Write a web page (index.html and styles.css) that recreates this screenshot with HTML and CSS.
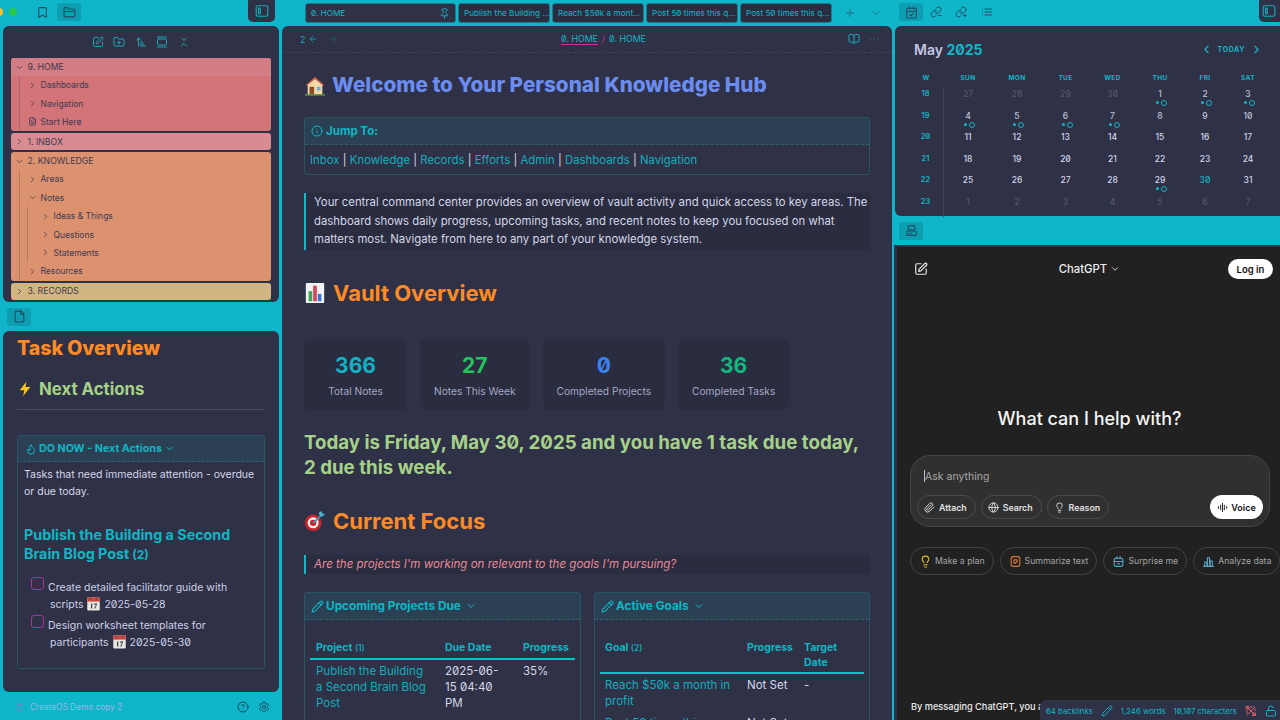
FILE: index.html
```html
<!DOCTYPE html>
<html lang="en">
<head>
<meta charset="utf-8">
<title>Knowledge Hub</title>
<link rel="stylesheet" href="styles.css">
</head>
<body>
<svg class="defs" aria-hidden="true">
<symbol id="bookmark" viewBox="0 0 24 24"><path d="M19 21l-7-4-7 4V5a2 2 0 0 1 2-2h10a2 2 0 0 1 2 2z"/></symbol>
<symbol id="folder" viewBox="0 0 24 24"><path d="M20 20a2 2 0 0 0 2-2V8a2 2 0 0 0-2-2h-7.9a2 2 0 0 1-1.69-.9L9.6 3.9A2 2 0 0 0 7.93 3H4a2 2 0 0 0-2 2v13a2 2 0 0 0 2 2Z"/><path d="M2 10h20"/></symbol>
<symbol id="sidebar" viewBox="0 0 24 24"><rect x="2" y="3" width="20" height="18" rx="3"/><rect x="6" y="7" width="3" height="10" rx="1"/></symbol>
<symbol id="edit" viewBox="0 0 24 24"><path d="M12 3H5a2 2 0 0 0-2 2v14a2 2 0 0 0 2 2h14a2 2 0 0 0 2-2v-7"/><path d="M18.375 2.625a1 1 0 0 1 3 3l-9.013 9.014a2 2 0 0 1-.853.505l-2.873.84a.5.5 0 0 1-.62-.62l.84-2.873a2 2 0 0 1 .506-.852z"/></symbol>
<symbol id="folderplus" viewBox="0 0 24 24"><path d="M20 20a2 2 0 0 0 2-2V8a2 2 0 0 0-2-2h-7.9a2 2 0 0 1-1.69-.9L9.6 3.9A2 2 0 0 0 7.93 3H4a2 2 0 0 0-2 2v13a2 2 0 0 0 2 2Z"/><path d="M12 10v6M9 13h6"/></symbol>
<symbol id="sort" viewBox="0 0 24 24"><path d="m3 8 4-4 4 4M7 4v16M11 12h4M11 16h7M11 20h10"/></symbol>
<symbol id="gallery" viewBox="0 0 24 24"><path d="M3 2h18M3 22h18"/><rect x="3" y="6" width="18" height="12" rx="2"/></symbol>
<symbol id="collapse" viewBox="0 0 24 24"><path d="m7 20 5-5 5 5M7 4l5 5 5-5"/></symbol>
<symbol id="right" viewBox="0 0 24 24"><path d="m9 18 6-6-6-6"/></symbol>
<symbol id="down" viewBox="0 0 24 24"><path d="m6 9 6 6 6-6"/></symbol>
<symbol id="left" viewBox="0 0 24 24"><path d="m15 18-6-6 6-6"/></symbol>
<symbol id="filetext" viewBox="0 0 24 24"><path d="M15 2H6a2 2 0 0 0-2 2v16a2 2 0 0 0 2 2h12a2 2 0 0 0 2-2V7Z"/><path d="M14 2v4a2 2 0 0 0 2 2h4M10 9H8M16 13H8M16 17H8"/></symbol>
<symbol id="file" viewBox="0 0 24 24"><path d="M15 2H6a2 2 0 0 0-2 2v16a2 2 0 0 0 2 2h12a2 2 0 0 0 2-2V7Z"/><path d="M14 2v4a2 2 0 0 0 2 2h4"/></symbol>
<symbol id="pin" viewBox="0 0 24 24"><path d="M12 17v5"/><path d="M9 10.76a2 2 0 0 1-1.11 1.79l-1.78.9A2 2 0 0 0 5 15.24V16a1 1 0 0 0 1 1h12a1 1 0 0 0 1-1v-.76a2 2 0 0 0-1.11-1.79l-1.78-.9A2 2 0 0 1 15 10.76V7a1 1 0 0 1 1-1 2 2 0 0 0 0-4H8a2 2 0 0 0 0 4 1 1 0 0 1 1 1z"/></symbol>
<symbol id="plus" viewBox="0 0 24 24"><path d="M5 12h14M12 5v14"/></symbol>
<symbol id="aleft" viewBox="0 0 24 24"><path d="m12 19-7-7 7-7M19 12H5"/></symbol>
<symbol id="aright" viewBox="0 0 24 24"><path d="M5 12h14M12 5l7 7-7 7"/></symbol>
<symbol id="book" viewBox="0 0 24 24"><path d="M12 7v14"/><path d="M3 18a1 1 0 0 1-1-1V4a1 1 0 0 1 1-1h5a4 4 0 0 1 4 4 4 4 0 0 1 4-4h5a1 1 0 0 1 1 1v13a1 1 0 0 1-1 1h-6a3 3 0 0 0-3 3 3 3 0 0 0-3-3z"/></symbol>
<symbol id="more" viewBox="0 0 24 24"><path d="M4 12h.01M12 12h.01M20 12h.01"/></symbol>
<symbol id="calendar" viewBox="0 0 24 24"><path d="M8 2v4M16 2v4"/><rect x="3" y="4" width="18" height="18" rx="2"/><path d="M3 10h18M9 16l2 2 4-4"/></symbol>
<symbol id="link" viewBox="0 0 24 24"><path d="M10 13a5 5 0 0 0 7.54.54l3-3a5 5 0 0 0-7.07-7.07l-1.72 1.71"/><path d="M14 11a5 5 0 0 0-7.54-.54l-3 3a5 5 0 0 0 7.07 7.07l1.71-1.71"/><path d="M17 19h5"/></symbol>
<symbol id="linkin" viewBox="0 0 24 24"><path d="M10 13a5 5 0 0 0 7.54.54l3-3a5 5 0 0 0-7.07-7.07l-1.72 1.71"/><path d="M14 11a5 5 0 0 0-7.54-.54l-3 3a5 5 0 0 0 7.07 7.07l1.71-1.71"/><path d="M17 19h5M19.5 16.500v5"/></symbol>
<symbol id="list" viewBox="0 0 24 24"><path d="M3 12h.01M3 18h.01M3 6h.01M8 12h13M8 18h13M8 6h13"/></symbol>
<symbol id="printer" viewBox="0 0 24 24"><rect x="6" y="3" width="12" height="8" rx="2"/><rect x="3" y="13" width="18" height="8" rx="2"/><path d="M7 17h2M11 17h2"/></symbol>
<symbol id="flame" viewBox="0 0 24 24"><path d="M8.5 14.5A2.5 2.5 0 0 0 11 12c0-1.380-.5-2-1-3-1.072-2.143-.224-4.054 2-6 .5 2.500 2 4.900 4 6.500 2 1.600 3 3.500 3 5.500a7 7 0 1 1-14 0c0-1.153.433-2.294 1-3a2.500 2.500 0 0 0 2.500 2.500z"/></symbol>
<symbol id="pencil" viewBox="0 0 24 24"><path d="M21.174 6.812a1 1 0 0 0-3.986-3.987L3.842 16.174a2 2 0 0 0-.5.83l-1.321 4.352a.5.5 0 0 0 .623.622l4.353-1.320a2 2 0 0 0 .83-.497z"/><path d="m15 5 4 4"/></symbol>
<symbol id="info" viewBox="0 0 24 24"><circle cx="12" cy="12" r="10"/><path d="M12 16v-4M12 8h.01"/></symbol>
<symbol id="help" viewBox="0 0 24 24"><circle cx="12" cy="12" r="10"/><path d="M9.09 9a3 3 0 0 1 5.830 1c0 2-3 3-3 3M12 17h.01"/></symbol>
<symbol id="gear" viewBox="0 0 24 24"><path d="M12.220 2h-.44a2 2 0 0 0-2 2v.18a2 2 0 0 1-1 1.730l-.43.25a2 2 0 0 1-2 0l-.15-.08a2 2 0 0 0-2.730.73l-.22.38a2 2 0 0 0 .73 2.730l.15.1a2 2 0 0 1 1 1.720v.51a2 2 0 0 1-1 1.740l-.15.09a2 2 0 0 0-.73 2.730l.22.38a2 2 0 0 0 2.730.73l.15-.08a2 2 0 0 1 2 0l.43.25a2 2 0 0 1 1 1.730V20a2 2 0 0 0 2 2h.44a2 2 0 0 0 2-2v-.18a2 2 0 0 1 1-1.730l.43-.25a2 2 0 0 1 2 0l.15.08a2 2 0 0 0 2.730-.73l.22-.39a2 2 0 0 0-.73-2.730l-.15-.08a2 2 0 0 1-1-1.740v-.5a2 2 0 0 1 1-1.740l.15-.09a2 2 0 0 0 .73-2.730l-.22-.38a2 2 0 0 0-2.730-.73l-.15.08a2 2 0 0 1-2 0l-.43-.25a2 2 0 0 1-1-1.730V4a2 2 0 0 0-2-2z"/><circle cx="12" cy="12" r="3"/></symbol>
<symbol id="updown" viewBox="0 0 24 24"><path d="m7 15 5 5 5-5M7 9l5-5 5 5"/></symbol>
<symbol id="lock" viewBox="0 0 24 24"><rect x="3" y="11" width="18" height="11" rx="2"/><path d="M7 11V7a5 5 0 0 1 9.900-1"/></symbol>
<symbol id="bulb" viewBox="0 0 24 24"><path d="M15 14c.2-1 .7-1.700 1.500-2.500 1-.9 1.500-2.200 1.500-3.500A6 6 0 0 0 6 8c0 1 .2 2.200 1.500 3.500.7.7 1.300 1.500 1.500 2.500M9 18h6M10 22h4"/></symbol>
<symbol id="globe" viewBox="0 0 24 24"><circle cx="12" cy="12" r="10"/><path d="M12 2a14.500 14.500 0 0 0 0 20 14.500 14.500 0 0 0 0-20M2 12h20"/></symbol>
<symbol id="clip" viewBox="0 0 24 24"><path d="m21.440 11.050-9.190 9.190a6 6 0 0 1-8.490-8.490l8.570-8.570A4 4 0 1 1 18 8.840l-8.590 8.570a2 2 0 0 1-2.830-2.830l8.490-8.480"/></symbol>
<symbol id="voice" viewBox="0 0 24 24"><path d="M3 10v4M8 7v10M12 3v18M16 7v10M21 10v4"/></symbol>
<symbol id="summ" viewBox="0 0 24 24"><rect x="4" y="3" width="16" height="18" rx="4"/><path d="M9 9h6v3l-3 3H9z"/></symbol>
<symbol id="gift" viewBox="0 0 24 24"><rect x="4" y="6" width="16" height="15" rx="3"/><path d="M4 12h16M9 3v4M15 3v4M10 16h4"/></symbol>
<symbol id="chart" viewBox="0 0 24 24"><path d="M3 21h18M5 21v-8h4v8M10 21V5h4v16M15 21v-10h4v10"/></symbol>
<symbol id="nolink" viewBox="0 0 24 24"><path d="M4 4l16 16M20 4 4 20"/><rect x="3" y="3" width="5" height="5"/><rect x="16" y="16" width="5" height="5"/><path d="M11 4h5M4 11v5M20 8v3"/></symbol>
<symbol id="emojical" viewBox="0 0 24 24"><rect x="2" y="2" width="20" height="21" rx="2" fill="#e8e6e3"/><rect x="2" y="2" width="20" height="7" fill="#c9453f"/><path d="M7 1v5M17 1v5" stroke="#555" stroke-width="1.500"/><path d="M8 12h2v8H8zM13 12h5l-3 8h-2l3-6h-3z" fill="#444"/></symbol>
</svg>

<div class="app">
  <aside class="col-left">
    <div class="topbar">
      <div class="lights"><i class="light yellow"></i><i class="light green"></i></div>
      <button class="tool bm"><svg class="ic i13"><use href="#bookmark"/></svg></button>
      <button class="tool on"><svg class="ic i13"><use href="#folder"/></svg></button>
      <span class="grow"></span>
      <button class="toggle"><svg class="ic i14"><use href="#sidebar"/></svg></button>
    </div>
    <section class="panel files">
      <div class="file-tools">
        <svg class="ic i12"><use href="#edit"/></svg>
        <svg class="ic i12"><use href="#folderplus"/></svg>
        <svg class="ic i12"><use href="#sort"/></svg>
        <svg class="ic i12"><use href="#gallery"/></svg>
        <svg class="ic i12"><use href="#collapse"/></svg>
      </div>
      <div class="tree">
        <div class="group g-home">
          <div class="row head"><svg class="ic i9"><use href="#down"/></svg><span>9. HOME</span></div>
          <div class="nest">
            <div class="row"><svg class="ic i9"><use href="#right"/></svg><span>Dashboards</span></div>
            <div class="row"><svg class="ic i9"><use href="#right"/></svg><span>Navigation</span></div>
            <div class="row"><svg class="ic i9"><use href="#filetext"/></svg><span>Start Here</span></div>
          </div>
        </div>
        <div class="group g-inbox"><div class="row head"><svg class="ic i9"><use href="#right"/></svg><span>1. INBOX</span></div></div>
        <div class="group g-know">
          <div class="row head"><svg class="ic i9"><use href="#down"/></svg><span>2. KNOWLEDGE</span></div>
          <div class="nest">
            <div class="row"><svg class="ic i9"><use href="#right"/></svg><span>Areas</span></div>
            <div class="row"><svg class="ic i9"><use href="#down"/></svg><span>Notes</span></div>
            <div class="nest inner">
              <div class="row"><svg class="ic i9"><use href="#right"/></svg><span>Ideas &amp; Things</span></div>
              <div class="row"><svg class="ic i9"><use href="#right"/></svg><span>Questions</span></div>
              <div class="row"><svg class="ic i9"><use href="#right"/></svg><span>Statements</span></div>
            </div>
            <div class="row"><svg class="ic i9"><use href="#right"/></svg><span>Resources</span></div>
          </div>
        </div>
        <div class="group g-rec"><div class="row head"><svg class="ic i9"><use href="#right"/></svg><span>3. RECORDS</span></div></div>
      </div>
    </section>
    <div class="subbar"><button class="tool on small"><svg class="ic i13"><use href="#file"/></svg></button></div>
    <section class="panel tasks">
      <h1 class="task-title">Task Overview</h1>
      <h2 class="task-sub"><svg class="bolt" viewBox="0 0 24 24"><path d="M14 1 4 14h7l-2 9 11-14h-7z"/></svg>Next Actions</h2>
      <hr class="rule">
      <div class="callout do-now">
        <div class="callout-head"><svg class="ic i12"><use href="#flame"/></svg><span>DO NOW - Next Actions</span><svg class="ic i11"><use href="#down"/></svg></div>
        <div class="callout-body">
          <p class="do-desc">Tasks that need immediate attention - overdue or due today.</p>
          <h3 class="do-title">Publish the Building a Second Brain Blog Post<small>(2)</small></h3>
          <div class="task"><i class="check"></i><p>Create detailed facilitator guide with<br><span class="ind">scripts <svg class="cal"><use href="#emojical"/></svg> 2025-05-28</span></p></div>
          <div class="task"><i class="check"></i><p>Design worksheet templates for<br><span class="ind">participants <svg class="cal"><use href="#emojical"/></svg> 2025-05-30</span></p></div>
        </div>
      </div>
    </section>
    <div class="vault">
      <svg class="ic i11 pink"><use href="#updown"/></svg>
      <span class="vault-name">CreateOS Demo copy 2</span>
      <span class="grow"></span>
      <svg class="ic i12"><use href="#help"/></svg>
      <svg class="ic i12"><use href="#gear"/></svg>
    </div>
  </aside>

  <main class="col-mid">
    <div class="tabbar">
      <div class="tab active"><span>0. HOME</span><svg class="ic i11"><use href="#pin"/></svg></div>
      <div class="tab"><span>Publish the Building ...</span></div>
      <div class="tab"><span>Reach $50k a mont...</span></div>
      <div class="tab"><span>Post 50 times this q...</span></div>
      <div class="tab"><span>Post 50 times this q...</span></div>
      <svg class="ic i12 tab-plus"><use href="#plus"/></svg>
      <svg class="ic i12 tab-chev"><use href="#down"/></svg>
    </div>
    <section class="doc">
      <header class="doc-head">
        <div class="nav"><span>2</span><svg class="ic i10"><use href="#aleft"/></svg><svg class="ic i10 dim"><use href="#aright"/></svg></div>
        <div class="crumb"><span class="crumb-link">0. HOME</span><span class="slash">/</span><span>0. HOME</span></div>
        <div class="doc-actions"><svg class="ic i12"><use href="#book"/></svg><svg class="ic i12"><use href="#more"/></svg></div>
      </header>
      <div class="doc-body">
        <h1 class="hub"><svg class="emoji" viewBox="0 0 24 24"><path d="M2 12 12 3l10 9-1.500 1L12 5.500 3.500 13z" fill="#c8553d"/><path d="M4 12l8-6.500 8 6.500v10H4z" fill="#f3d9a8"/><rect x="6" y="14" width="5" height="8" fill="#8a4b2a"/><rect x="14" y="14" width="4" height="4" fill="#6fb3d9"/><path d="M1 22h22v1.500H1z" fill="#6aa84f"/></svg>Welcome to Your Personal Knowledge Hub</h1>
        <div class="callout jump">
          <div class="callout-head"><svg class="ic i12"><use href="#info"/></svg><span>Jump To:</span></div>
          <div class="callout-body jump-links"><a>Inbox</a> | <a>Knowledge</a> | <a>Records</a> | <a>Efforts</a> | <a>Admin</a> | <a>Dashboards</a> | <a>Navigation</a></div>
        </div>
        <blockquote class="intro">Your central command center provides an overview of vault activity and quick access to key areas. The dashboard shows daily progress, upcoming tasks, and recent notes to keep you focused on what matters most. Navigate from here to any part of your knowledge system.</blockquote>
        <h2 class="sect vault-h"><svg class="emoji" viewBox="0 0 24 24"><rect x="2" y="1" width="20" height="22" rx="1" fill="#f2f2f2"/><rect x="5" y="10" width="4" height="11" fill="#3aa655"/><rect x="10" y="4" width="4" height="17" fill="#d6455d"/><rect x="15" y="13" width="4" height="8" fill="#3478d6"/></svg>Vault Overview</h2>
        <div class="stats">
          <div class="stat"><b class="s-teal">366</b><span>Total Notes</span></div>
          <div class="stat"><b class="s-green">27</b><span>Notes This Week</span></div>
          <div class="stat"><b class="s-blue">0</b><span>Completed Projects</span></div>
          <div class="stat"><b class="s-emer">36</b><span>Completed Tasks</span></div>
        </div>
        <p class="today">Today is Friday, May 30, 2025 and you have 1 task due today, 2 due this week.</p>
        <h2 class="sect focus-h"><svg class="emoji" viewBox="0 0 24 24"><circle cx="10" cy="14" r="9" fill="#c9242b"/><circle cx="10" cy="14" r="6" fill="#f4f0ea"/><circle cx="10" cy="14" r="3.500" fill="#c9242b"/><path d="M10 14 21 4" stroke="#3f9bb5" stroke-width="2"/><path d="M19 1l1 3 3 1-3 2-3-1-1-3z" fill="#4db2cc"/></svg>Current Focus</h2>
        <blockquote class="ask">Are the projects I'm working on relevant to the goals I'm pursuing?</blockquote>
        <div class="duo">
          <div class="callout dash">
            <div class="callout-head"><svg class="ic i13"><use href="#pencil"/></svg><span>Upcoming Projects Due</span><svg class="ic i12"><use href="#down"/></svg></div>
            <table class="grid-t t-projects">
              <thead><tr><th>Project <small>(1)</small></th><th>Due Date</th><th>Progress</th></tr></thead>
              <tbody><tr><td><a>Publish the Building a Second Brain Blog Post</a></td><td>2025-06-15 04:40 PM</td><td>35%</td></tr></tbody>
            </table>
          </div>
          <div class="callout dash">
            <div class="callout-head"><svg class="ic i13"><use href="#pencil"/></svg><span>Active Goals</span><svg class="ic i12"><use href="#down"/></svg></div>
            <table class="grid-t t-goals">
              <thead><tr><th>Goal <small>(2)</small></th><th>Progress</th><th>Target Date</th></tr></thead>
              <tbody>
                <tr><td><a>Reach $50k a month in profit</a></td><td>Not Set</td><td>-</td></tr>
                <tr><td><a>Post 50 times this quarter</a></td><td>Not Set</td><td>-</td></tr>
              </tbody>
            </table>
          </div>
        </div>
      </div>
    </section>
  </main>

  <aside class="col-right">
    <div class="topbar right-top">
      <button class="tool on"><svg class="ic i13"><use href="#calendar"/></svg></button>
      <button class="tool plain"><svg class="ic i12"><use href="#link"/></svg></button>
      <button class="tool plain"><svg class="ic i12"><use href="#linkin"/></svg></button>
      <button class="tool plain"><svg class="ic i12"><use href="#list"/></svg></button>
      <span class="grow"></span>
      <button class="toggle rt"><svg class="ic i14"><use href="#sidebar"/></svg></button>
    </div>
    <section class="calendar">
      <div class="cal-head">
        <h2 class="month">May <em>2025</em></h2>
        <div class="cal-nav"><svg class="ic i13"><use href="#left"/></svg><span>TODAY</span><svg class="ic i13"><use href="#right"/></svg></div>
      </div>
      <div class="cal-grid">
        <b class="dow">W</b><b class="dow">SUN</b><b class="dow">MON</b><b class="dow">TUE</b><b class="dow">WED</b><b class="dow">THU</b><b class="dow">FRI</b><b class="dow">SAT</b>
        <i class="wk">18</i><span class="d out">27</span><span class="d out">28</span><span class="d out">29</span><span class="d out">30</span><span class="d mute dots">1</span><span class="d mute dots">2</span><span class="d mute dots">3</span>
        <i class="wk">19</i><span class="d mute dots">4</span><span class="d mute dots">5</span><span class="d mute dots">6</span><span class="d mute dots">7</span><span class="d mute">8</span><span class="d mute">9</span><span class="d mute">10</span>
        <i class="wk">20</i><span class="d">11</span><span class="d">12</span><span class="d">13</span><span class="d">14</span><span class="d">15</span><span class="d">16</span><span class="d">17</span>
        <i class="wk">21</i><span class="d">18</span><span class="d">19</span><span class="d">20</span><span class="d">21</span><span class="d">22</span><span class="d">23</span><span class="d">24</span>
        <i class="wk">22</i><span class="d">25</span><span class="d">26</span><span class="d">27</span><span class="d">28</span><span class="d dots">29</span><span class="d now">30</span><span class="d">31</span>
        <i class="wk">23</i><span class="d out">1</span><span class="d out">2</span><span class="d out">3</span><span class="d out">4</span><span class="d out">5</span><span class="d out">6</span><span class="d out">7</span>
      </div>
    </section>
    <div class="subbar rt-sub"><button class="tool on small"><svg class="ic i13"><use href="#printer"/></svg></button></div>
    <section class="chat">
      <header class="chat-head">
        <svg class="ic i14 white"><use href="#edit"/></svg>
        <div class="chat-title">ChatGPT <svg class="ic i10"><use href="#down"/></svg></div>
        <button class="login">Log in</button>
      </header>
      <h2 class="chat-hello">What can I help with?</h2>
      <div class="ask-box">
        <div class="ask-input"><i class="caret"></i>Ask anything</div>
        <div class="ask-tools">
          <span class="chip"><svg class="ic i11"><use href="#clip"/></svg>Attach</span>
          <span class="chip"><svg class="ic i11"><use href="#globe"/></svg>Search</span>
          <span class="chip"><svg class="ic i11"><use href="#bulb"/></svg>Reason</span>
          <span class="grow"></span>
          <span class="voice"><svg class="ic i11"><use href="#voice"/></svg>Voice</span>
        </div>
      </div>
      <div class="suggest">
        <span class="pill"><svg class="ic i13 c-y"><use href="#bulb"/></svg>Make a plan</span>
        <span class="pill"><svg class="ic i13 c-o"><use href="#summ"/></svg>Summarize text</span>
        <span class="pill"><svg class="ic i13 c-b"><use href="#gift"/></svg>Surprise me</span>
        <span class="pill"><svg class="ic i13 c-b"><use href="#chart"/></svg>Analyze data</span>
      </div>
      <p class="legal">By messaging ChatGPT, you a</p>
    </section>
  </aside>
</div>
<div class="status">
  <span>64 backlinks</span>
  <svg class="ic i12"><use href="#pencil"/></svg>
  <span>1,246 words</span>
  <span>10,107 characters</span>
  <svg class="ic i12 red"><use href="#nolink"/></svg>
  <svg class="ic i12"><use href="#lock"/></svg>
</div>
</body>
</html>
```

FILE: styles.css
```css
* { box-sizing: border-box; }
html, body { margin: 0; padding: 0; height: 100%; }
body {
  width: 1280px; height: 720px; overflow: hidden; position: relative;
  background: #0fb5c8; color: #cdd0e6;
  font-family: Inter, "Noto Sans", sans-serif;
  font-feature-settings: "zero" 1;
}
h1, h2, h3, p, blockquote { margin: 0; }
button { border: 0; padding: 0; background: none; color: inherit; font: inherit; }
.defs { position: absolute; width: 0; height: 0; }
.ic { fill: none; stroke: currentColor; stroke-width: 2; stroke-linecap: round; stroke-linejoin: round; flex: none; display: block; }
.i9 { width: 9px; height: 9px; } .i10 { width: 10px; height: 10px; } .i11 { width: 11px; height: 11px; }
.i12 { width: 12px; height: 12px; } .i13 { width: 13px; height: 13px; } .i14 { width: 14px; height: 14px; }
.i15 { width: 15px; height: 15px; } .i16 { width: 16px; height: 16px; }
.grow { flex: 1; }

.app { display: grid; grid-template-columns: 281px 612px 387px; height: 720px; }
.col-left, .col-mid, .col-right { display: flex; flex-direction: column; min-width: 0; height: 720px; }

.topbar { height: 26px; flex: none; display: flex; align-items: flex-start; color: #1b4f66; }
.lights { display: flex; gap: 6px; margin: 8px 0 0 -5px; width: 36px; }
.light { width: 8px; height: 8px; border-radius: 50%; display: block; }
.yellow { background: #f6bd2f; } .green { background: #2ac84a; }
.tool { width: 24px; height: 18px; border-radius: 3px; display: flex; align-items: center; justify-content: center; margin-top: 3px; color: #234b62; }
.tool.on { background: #0d9eb1; }
.bm { margin-left: -1px; margin-right: 3px; }
.toggle { width: 27px; height: 22px; background: #2f3146; color: #1aa9b9; border-radius: 0 0 5px 5px; display: flex; align-items: center; justify-content: center; margin-right: 6px; }
.panel { background: #2f3146; margin: 0 2px 0 3px; border-radius: 6px; overflow: hidden; }
.files { height: 276px; flex: none; padding: 0 8px; }
.file-tools { height: 32px; display: flex; align-items: center; justify-content: center; gap: 9.500px; color: #1aa7b6; padding: 0 1px 0 0; }
.tree { display: flex; flex-direction: column; gap: 2px; font-size: 8.500px; color: #3e3a50; }
.group { border-radius: 3px; overflow: hidden; }
.row { height: 18.400px; display: flex; align-items: center; gap: 3.500px; padding-left: 4px; white-space: nowrap; }
.head { font-size: 8.700px; padding-left: 4px; height: 18px; }
.nest { margin-left: 8px; border-left: 1.500px solid rgba(90, 60, 70, .3); padding-left: 3px; }
.nest .row { padding-left: 5px; }
.nest.inner { margin: 0 0 0 4px; padding-left: 8px; }
.g-home { background: #d27478; } .g-home .head { background: #d47d84; }
.g-inbox { background: #d88c92; height: 17px; } .g-inbox .head, .g-rec .head { height: 17px; }
.g-know { background: #dd926f; }
.g-rec { background: #d2b682; height: 17px; }
.subbar { height: 29px; flex: none; display: flex; align-items: center; padding-left: 7px; }
.subbar .tool { margin-top: 0; }
.tasks { flex: 1; padding: 0 14px; }
.task-title { font-size: 19.500px; line-height: 24px; font-weight: 800; color: #ff8a24; margin-top: 5px; }
.task-sub { font-size: 16.800px; line-height: 22px; font-weight: 700; color: #a6d189; margin-top: 18px; display: flex; align-items: center; gap: 6px; }
.bolt { width: 16px; height: 16px; fill: #f7c325; }
.rule { border: 0; border-top: 1px solid #4a4d63; margin: 9px 0 0; }
.callout { border: 1px solid #275566; border-radius: 3px; }
.callout-head { background: #2c4054; border-bottom: 1px dashed #2b6273; color: #12b5c4; font-weight: 700; display: flex; align-items: center; gap: 4px; white-space: nowrap; }
.do-now { margin-top: 25px; height: 234px; }
.do-now .callout-head { height: 26px; padding-left: 7px; font-size: 10.700px; gap: 2px; }
.do-now .callout-body { padding: 5px 6px 0; }
.do-desc { font-size: 10.500px; line-height: 16.500px; color: #d5d7ea; }
.do-title { font-size: 14.300px; line-height: 19px; font-weight: 700; color: #12b5c4; margin-top: 25px; }
.do-title small { font-size: 12px; margin-left: 3px; }
.task { display: flex; gap: 4px; margin-top: 2px; font-size: 10.500px; line-height: 17px; color: #cdd0e6; padding-left: 7px; }
.do-title + .task { margin-top: 13px; }
.check { width: 13px; height: 13px; border: 1.500px solid #a8329f; border-radius: 3px; flex: none; display: block; }
.task p { margin-top: 2px; }
.ind { padding-left: 2px; }
.cal { width: 15px; height: 15px; vertical-align: -3px; }
.vault { flex: none; height: 28px; display: flex; align-items: center; gap: 5.500px; padding: 2px 10px 0 13.500px; color: #1a4a60; margin-right: 1px; font-size: 8.300px; }
.vault svg:last-child { margin-left: 4px; }
.pink { color: #d64fd2; }
.vault-name { color: #a3b2e6; white-space: nowrap; }

.tabbar { height: 26px; flex: none; display: flex; align-items: flex-start; padding: 3px 0 0 24px; gap: 2px; color: #1f6f83; }
.tab { height: 20px; width: 92px; background: #2a2c40; border: 1px solid #1c7a8c; border-radius: 3px; color: #15b5c5; font-size: 8.200px; display: flex; align-items: center; padding: 0 5px; white-space: nowrap; overflow: hidden; justify-content: space-between; }
.tab.active { width: 151px; background: #2f3146; }
.tab-plus { margin: 4px 0 0 10px; }
.tab-chev { margin: 4px 0 0 12px; }
.doc { flex: 1; min-height: 0; background: #2f3146; margin: 0 1px; border-radius: 6px 6px 0 0; overflow: hidden; display: flex; flex-direction: column; }
.doc-head { height: 27px; flex: none; border-bottom: 1px dashed #3f4258; display: grid; grid-template-columns: 1fr auto 1fr; align-items: center; padding: 0 12px 0 18px; color: #17a7b6; font-size: 8.800px; }
.nav { display: flex; gap: 3px; align-items: center; }
.dim { opacity: .4; margin-left: 7px; }
.crumb { display: flex; gap: 4px; color: #14b5c4; margin-left: 27px; }
.crumb-link { border-bottom: 1px solid #c42ea8; line-height: 11px; }
.slash { color: #c42ea8; }
.doc-actions { display: flex; gap: 8px; justify-content: flex-end; }
.doc-body { padding: 0 22px; flex: 1; }
.hub { font-size: 20.700px; line-height: 30px; font-weight: 800; color: #6b8cf0; margin-top: 17px; display: flex; align-items: center; gap: 6px; white-space: nowrap; }
.emoji { width: 22px; height: 22px; flex: none; }
.jump { margin-top: 17px; height: 58px; }
.jump .callout-head { height: 27px; padding-left: 6px; font-size: 11.500px; gap: 3px; }
.jump-links { padding: 7px 5px; font-size: 11.400px; line-height: 16px; color: #d5d7ea; white-space: nowrap; }
a { color: #12aebd; }
.intro { margin-top: 18px; border-left: 2px solid #13b5c6; background: #2a2c3f; padding: 0 0 0 8px; font-size: 11.350px; line-height: 18.500px; height: 57px; color: #d5d7ea; }
.sect { font-size: 22px; line-height: 28px; font-weight: 700; color: #ff8a24; display: flex; align-items: center; gap: 7px; }
.vault-h { margin-top: 29px; }
.stats { display: flex; gap: 13px; margin-top: 32px; }
.stat { background: #2a2c3f; height: 71px; min-width: 103px; padding: 0 14px; border-radius: 6px; display: flex; flex-direction: column; align-items: center; text-align: center; font-size: 10.200px; color: #a4a8c4; }
.stat b { font-size: 21px; line-height: 28px; margin-top: 13px; font-weight: 700; }
.stat span { margin-top: 4px; line-height: 14px; white-space: nowrap; }
.s-teal { color: #13b1c6; } .s-green { color: #23c45e; } .s-blue { color: #3c83f5; } .s-emer { color: #11b981; }
.today { font-size: 18.700px; line-height: 25px; font-weight: 700; color: #a6d189; margin-top: 20px; }
.focus-h { margin-top: 27px; }
.ask { margin-top: 20px; border-left: 2px solid #13b5c6; background: #2a2c3f; height: 19px; padding-left: 8px; font-size: 11.550px; line-height: 19px; font-style: italic; color: #e98a98; white-space: nowrap; }
.duo { display: grid; grid-template-columns: 277px 276px; gap: 13px; margin-top: 18px; }
.dash { height: 180px; }
.dash .callout-head { height: 27px; padding-left: 6px; font-size: 11.800px; gap: 2px; }
.dash .callout-head svg:last-child { margin-left: 2px; }
.grid-t { border-collapse: collapse; table-layout: fixed; margin: 15px 0 0 5px; width: 265px; font-size: 11.500px; line-height: 16px; }
.grid-t th { text-align: left; color: #12b5c4; font-size: 10.500px; line-height: 15px; font-weight: 700; padding: 5px 5px 2px; border-bottom: 2px solid #0fc1c9; vertical-align: top; }
.grid-t th small { font-size: 8.500px; font-weight: 500; }
.grid-t td { padding: 3px 5px; vertical-align: top; color: #d5d7ea; }
.t-projects th:nth-child(1) { width: 129px; } .t-projects th:nth-child(2) { width: 78px; }
.t-projects th, .t-projects td { padding-left: 6px; }
.t-projects td:nth-child(1) { padding-right: 10px; }
.t-projects td:nth-child(2) { padding-right: 16px; }
.t-goals th:nth-child(1) { width: 142px; } .t-goals th:nth-child(2) { width: 57px; }
.t-goals { width: 264px; }

.right-top { padding-left: 6px; }
.plain { width: 25.500px; }
.rt { margin-right: 0; width: 21px; justify-content: flex-start; padding-left: 3px; border-radius: 0 0 0 5px; }
.calendar { height: 190px; flex: none; background: #2f3146; margin-left: 2px; border-radius: 6px 0 0 6px; padding: 0 0 0 13px; }
.cal-head { display: flex; align-items: center; justify-content: space-between; height: 47px; padding: 0 17px 0 6px; }
.month { font-size: 14px; font-weight: 600; color: #c3c6e0; }
.month em { font-style: normal; color: #13b5c6; font-weight: 700; }
.cal-nav { display: flex; align-items: center; gap: 5px; color: #13b5c6; font-size: 7px; font-weight: 700; letter-spacing: .6px; }
.cal-grid { display: grid; grid-template-columns: 36px 48px 50px 47px 47px 48px 42px 44px; grid-template-rows: 14px; grid-auto-rows: 21.600px; text-align: center; }
.dow { font-size: 6.500px; color: #13b5c6; letter-spacing: .4px; line-height: 10px; font-weight: 700; }
.wk { font-style: normal; font-weight: 600; color: #13b5c6; font-size: 7.500px; line-height: 14px; border-right: 1px solid #3f4258; }
.d { font-size: 8.500px; line-height: 14px; font-weight: 500; color: #d5d7ea; position: relative; }
.d.out { color: #55586c; }
.d.mute { color: #bfc2da; }
.d.now { color: #13b5c6; }
.dots::after { content: ""; position: absolute; left: 50%; top: 14px; margin-left: -4px; width: 3px; height: 3px; border-radius: 50%; background: #13b5c6; }
.dots::before { content: ""; position: absolute; left: 50%; top: 13px; margin-left: 1px; width: 4px; height: 4px; border-radius: 50%; border: 1px solid #13b5c6; }
.rt-sub { padding-left: 6px; height: 29px; }
.rt-sub .tool { width: 24px; }
.chat { flex: 1; min-height: 0; background: #212121; border-left: 3px solid #2f3146; margin-left: 1px; display: flex; flex-direction: column; color: #ececec; position: relative; overflow: hidden; border-top: 2px solid #2f3146; }
.chat-head { display: grid; grid-template-columns: 1fr auto 1fr; align-items: center; height: 44px; padding: 0 7px 0 17px; flex: none; }
.white { color: #e6e6e6; }
.chat-title { display: flex; align-items: center; gap: 3px; font-size: 11.300px; font-weight: 500; color: #ececec; margin-left: -8px; white-space: nowrap; }
.login { justify-self: end; background: #fff; color: #111; border-radius: 10px; height: 20px; width: 45px; font-size: 9.500px; font-weight: 600; }
.chat-hello { font-size: 18px; font-weight: 500; line-height: 24px; text-align: center; margin-top: 116px; color: #f4f4f4; flex: none; padding-left: 2px; }
.ask-box { margin: 24px 10px 0 13px; height: 72px; border: 1px solid #454545; border-radius: 20px; background: #303030; padding: 11px 6px 0; flex: none; }
.ask-input { font-size: 10.500px; color: #a8a8a8; display: flex; align-items: center; height: 18px; padding-left: 7px; }
.caret { width: 1px; height: 12px; background: #c0c0c0; display: block; }
.ask-tools { display: flex; gap: 5px; margin-top: 10px; align-items: center; }
.chip { height: 24px; border: 1px solid #4a4a4a; border-radius: 12px; padding: 0 8px 0 6px; display: flex; align-items: center; gap: 4px; font-size: 8.800px; font-weight: 600; color: #e0e0e0; }
.voice { height: 24px; width: 53px; background: #fff; border-radius: 12px; color: #111; display: flex; align-items: center; gap: 3px; justify-content: center; font-size: 9px; font-weight: 600; }
.suggest { display: flex; gap: 6px; margin: 20px 0 0 13px; flex: none; white-space: nowrap; }
.pill { height: 28px; border: 1px solid #424242; border-radius: 14px; padding: 0 8px; display: flex; align-items: center; gap: 3px; font-size: 8.700px; color: #a6a6a6; flex: none; }
.c-y { color: #e0bd27; } .c-o { color: #d9793a; } .c-b { color: #5aa9c9; }
.legal { position: absolute; left: 14px; bottom: 7px; font-size: 9.200px; font-weight: 500; line-height: 12px; white-space: nowrap; color: #ececec; }
.status { position: absolute; right: 0; bottom: 0; width: 240px; height: 20px; background: #2f3146; border-radius: 6px 0 0 0; display: flex; align-items: center; gap: 8px; padding: 1px 0 0 6px; color: #14b5c4; font-size: 7.800px; white-space: nowrap; }
.red { color: #d9606b; }
```
